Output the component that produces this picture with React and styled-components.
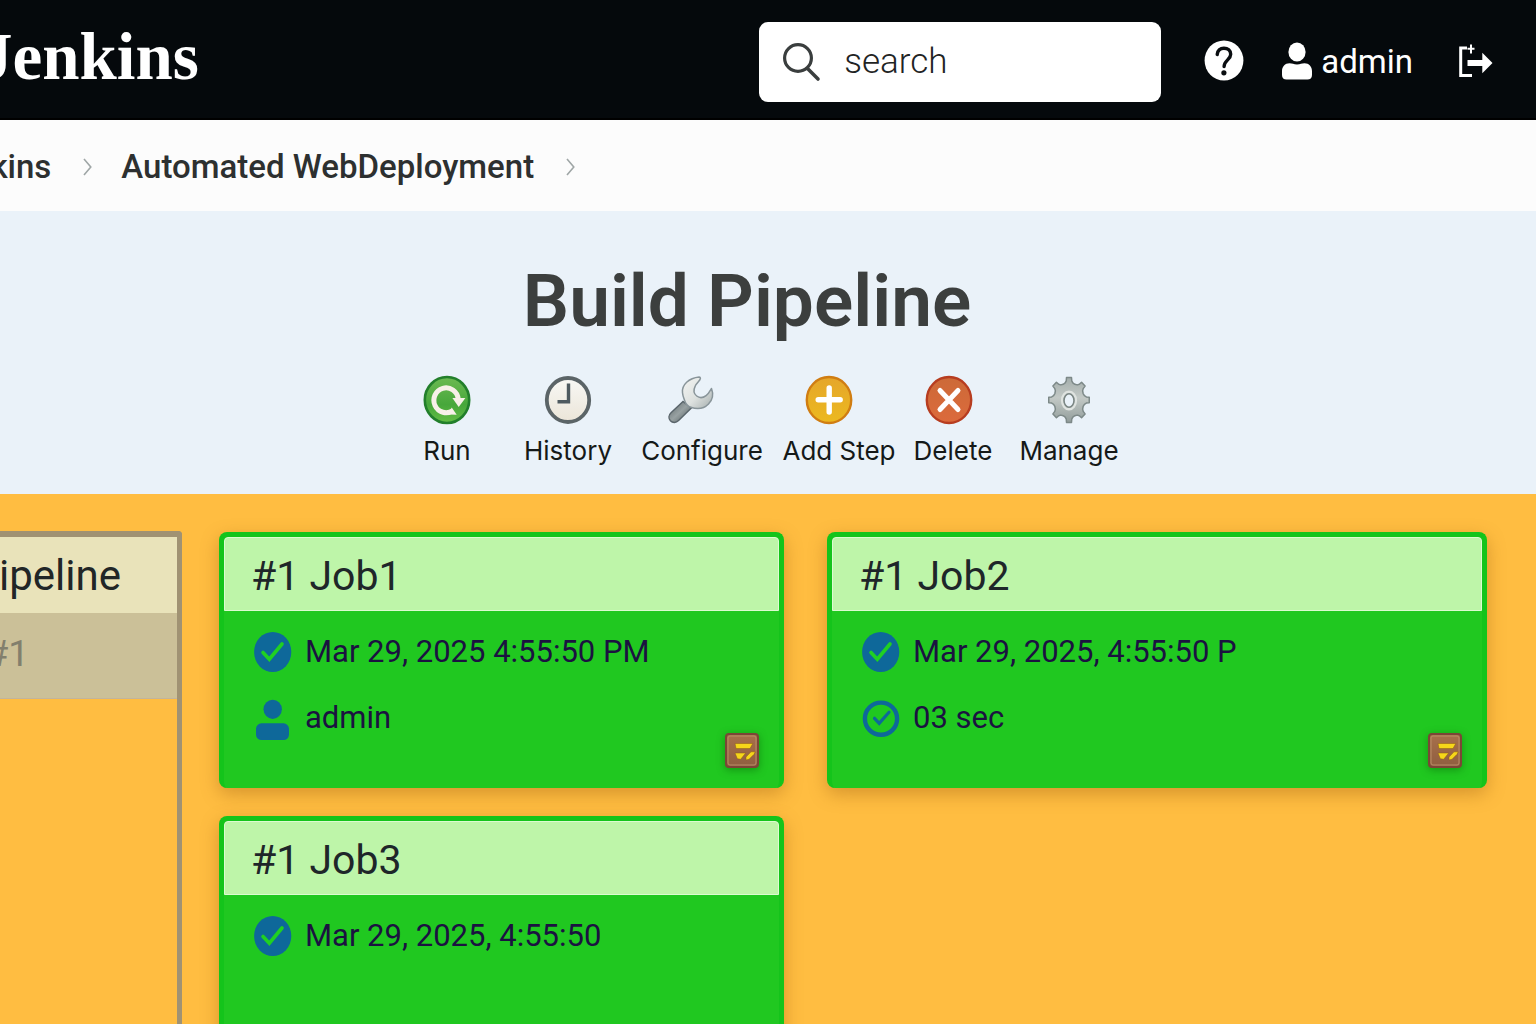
import React from "react";
import styled, { createGlobalStyle } from "styled-components";

const GlobalStyle = createGlobalStyle`
  *, *::before, *::after { box-sizing: border-box; }
  body { margin: 0; font-family: Roboto, "Liberation Sans", sans-serif; }
  h1, h2, p, ol, ul { margin: 0; padding: 0; }
  ol, ul { list-style: none; }
  button { border: 0; padding: 0; background: none; font: inherit; color: inherit; cursor: pointer; }
  a { color: inherit; text-decoration: none; }
  svg { display: block; flex: none; overflow: visible; }
`;

const Page = styled.div`
  display: flex;
  flex-direction: column;
  height: 100vh;
  overflow: hidden;
`;

/* ---------- top bar ---------- */

const TopBar = styled.header`
  display: flex;
  align-items: center;
  padding: 22px 43px 16px 0;
  background: #05090c;
  border-bottom: 2px solid #000;
  color: #fff;
`;

const Brand = styled.a`
  align-self: flex-start;
  margin-left: -21px;
  margin-right: auto;
  font: 700 67px/68px "Liberation Serif", serif;
`;

const SearchBox = styled.label`
  display: flex;
  align-items: center;
  gap: 24px;
  flex: 0 1 402px;
  min-width: 0;
  height: 80px;
  padding: 0 24px;
  border-radius: 9px;
  background: #fff;
`;

const SearchInput = styled.input`
  flex: 1;
  width: 100%;
  min-width: 0;
  border: 0;
  padding: 0;
  outline: 0;
  background: none;
  font: 300 35px/48px Roboto, "Liberation Sans", sans-serif;
  color: #1f2424;
  &::placeholder { color: #1f2424; opacity: 1; }
`;

const HelpButton = styled.button`
  margin-left: 44px;
`;

const UserLink = styled.a`
  display: flex;
  align-items: center;
  gap: 9px;
  margin-left: 38px;
  font-size: 33px;
  line-height: 40px;
`;

const LogoutButton = styled.button`
  margin-left: 46px;
`;

/* ---------- breadcrumbs ---------- */

const Crumbs = styled.ol`
  display: flex;
  align-items: center;
  height: 91px;
  padding-top: 2px;
  margin-left: -64px;
`;

const CrumbNav = styled.nav`
  flex: none;
  background: #fcfcfc;
`;

const Crumb = styled.li`
  display: flex;
  align-items: center;
  gap: 32px;
  margin-right: 29px;
  font-size: 33px;
  font-weight: 500;
  line-height: 40px;
  color: #2d3030;
`;

/* ---------- heading and actions ---------- */

const Hero = styled.section`
  display: flex;
  flex-direction: column;
  align-items: center;
  gap: 35px;
  flex: none;
  padding: 50px 42px 27px 0;
  background: #eaf2f9;
`;

const Title = styled.h1`
  font-size: 73px;
  font-weight: 600;
  line-height: 80px;
  color: #3c3f3e;
`;

const Toolbar = styled.div`
  display: grid;
  grid-template-columns: 134px 108px 160px 114px 114px 118px;
  padding-left: 14px;
`;

const ToolButton = styled.button`
  display: flex;
  flex-direction: column;
  align-items: center;
  gap: 11px;
  font: 400 26px/32px Inter, "Liberation Sans", sans-serif;
  color: #151918;
  white-space: nowrap;

  svg { margin-right: ${(p) => p.$iconShift || 0}px; }
`;

/* ---------- board ---------- */

const Board = styled.main`
  display: flex;
  gap: 37px;
  flex: 1;
  min-height: 0;
  padding: 37px 49px 0 0;
  background: #ffbd41;
`;

const Lane = styled.aside`
  flex: none;
  width: 182px;
  border: solid #a09273;
  border-width: 6px 5px 0 0;
  border-top-right-radius: 4px;
`;

const LaneTitle = styled.h2`
  display: flex;
  justify-content: flex-end;
  align-items: center;
  height: 76px;
  padding-right: 56px;
  background: #e9e3ba;
  font-size: 42px;
  font-weight: 400;
  color: #212627;
  white-space: nowrap;
`;

const LaneRun = styled.p`
  display: flex;
  justify-content: flex-end;
  align-items: center;
  height: 86px;
  padding: 0 148px 4px 0;
  background: #cbc098;
  border-bottom: 1px solid #c2b49c;
  font-size: 37px;
  color: #827f6d;
  white-space: nowrap;
`;

const Jobs = styled.div`
  flex: 1;
  display: grid;
  grid-template-columns: 565fr 660fr;
  grid-auto-rows: 256px;
  gap: 28px 43px;
  padding-top: 1px;
`;

const Card = styled.article`
  display: flex;
  flex-direction: column;
  border: 5px solid #14c41b;
  border-bottom: 0;
  border-radius: 8px;
  background: #20c820;
  background-clip: padding-box;
  background-clip: border-box;
  box-shadow: 0 6px 18px rgba(140, 80, 10, 0.36);
`;

const CardTitle = styled.h2`
  padding: 13px 26px 9px;
  border: 1px solid #dcfbd0;
  border-radius: 4px 4px 0 0;
  background: #bef5a9;
  font-size: 41px;
  font-weight: 400;
  line-height: 50px;
  color: #1e2629;
`;

const CardBody = styled.div`
  flex: 1;
  display: flex;
  justify-content: space-between;
  padding: 21px 20px 20px 30px;
`;

const Facts = styled.ul`
  display: flex;
  flex-direction: column;
  gap: 26px;
`;

const Fact = styled.li`
  display: flex;
  align-items: center;
  gap: 13px;
  height: 40px;
  font-size: 31px;
  line-height: 36px;
  color: #1b1240;
  white-space: nowrap;
`;

const NoteButton = styled.button`
  align-self: flex-end;
  width: 34px;
  height: 35px;
  filter: drop-shadow(0 2px 4px rgba(0, 70, 0, 0.4));
`;

/* ---------- icons ---------- */

const SearchIcon = () => (
  <svg width="37" height="38" viewBox="0 0 37 38" fill="none" stroke="#3a3e3e">
    <circle cx="15" cy="15" r="13.4" strokeWidth="3.2" />
    <path d="M24.5 25.5 35 36" strokeWidth="3.6" strokeLinecap="round" />
  </svg>
);

const HelpIcon = () => (
  <svg width="39" height="40" viewBox="0 0 39 40">
    <ellipse cx="19" cy="18.5" rx="19.4" ry="20" fill="#fff" />
    <path
      d="M12.200 12.500c.3-4 3-6.300 6.700-6.300 4 0 6.800 2.400 6.800 6 0 5.600-6.400 5.800-6.600 12.300"
      fill="none" stroke="#0a0e11" strokeWidth="3.4" strokeLinecap="round"
    />
    <circle cx="18.900" cy="30.800" r="2.600" fill="#0a0e11" />
  </svg>
);

const UserIcon = () => (
  <svg width="30" height="38" viewBox="0 0 30 38" fill="#fff">
    <ellipse cx="15" cy="9" rx="8.600" ry="9.600" />
    <path d="M7.500 20.300c3 0 4 1.200 7.500 1.200s4.500-1.200 7.500-1.200c4.500 0 7.500 3.400 7.500 8v3.600c0 3-1.800 4.600-4.500 4.600h-21C1.800 36.500 0 34.900 0 31.900v-3.600c0-4.600 3-8 7.500-8Z" />
  </svg>
);

const LogoutIcon = () => (
  <svg width="34" height="34" viewBox="0 0 34 34">
    <path d="M8 3H1.700v27.400H13" fill="none" stroke="#fff" strokeWidth="3" />
    <path d="M12-.5v9M8.500 3.800h7" stroke="#fff" strokeWidth="2" />
    <path d="M8.500 15h14.800V7.800L33.500 18 23.300 28.200v-7.200H8.500Z" fill="#fff" />
  </svg>
);

const Chevron = () => (
  <svg width="9" height="18" viewBox="0 0 9 18" fill="none" stroke="#9fa6a6" strokeWidth="1.600">
    <path d="m1 1 6.800 8L1 17" />
  </svg>
);

const RunIcon = () => (
  <svg width="48" height="48" viewBox="0 0 48 48">
    <defs>
      <linearGradient id="run" x1="0" y1="0" x2="0" y2="1">
        <stop offset="0" stopColor="#6cba52" />
        <stop offset="0.600" stopColor="#47a73b" />
        <stop offset="1" stopColor="#63bd44" />
      </linearGradient>
    </defs>
    <ellipse cx="24" cy="24" rx="22.200" ry="23" fill="url(#run)" stroke="#227f2b" strokeWidth="2.600" />
    <path d="M35.200 23A12.200 12.400 0 1 0 30 34.500" fill="none" stroke="#f7f0e8" strokeWidth="5" />
    <path d="M29.400 22h13l-6.700 9Z" fill="#f7f0e8" />
    <path d="m28.700 31.500 5 7.200-8-.2Z" fill="#f7f0e8" />
  </svg>
);

const HistoryIcon = () => (
  <svg width="48" height="48" viewBox="0 0 48 48">
    <defs>
      <linearGradient id="face" x1="0" y1="0" x2="0" y2="1">
        <stop offset="0" stopColor="#f8f8f5" />
        <stop offset="1" stopColor="#ebe5d8" />
      </linearGradient>
    </defs>
    <ellipse cx="24" cy="24" rx="21.200" ry="22" fill="url(#face)" stroke="#5b6467" strokeWidth="3.800" />
    <path d="M24.500 7.500v18.300h-11" fill="none" stroke="#4e5a60" strokeWidth="3.400" />
  </svg>
);

const ConfigureIcon = () => (
  <svg width="48" height="48" viewBox="0 0 48 48">
    <defs>
      <linearGradient id="head" x1="0" y1="0" x2="1" y2="1">
        <stop offset="0" stopColor="#f3f4f2" />
        <stop offset="0.550" stopColor="#dde1df" />
        <stop offset="1" stopColor="#a4adad" />
      </linearGradient>
      <linearGradient id="grip" x1="0" y1="0" x2="1" y2="1">
        <stop offset="0.150" stopColor="#6f797b" />
        <stop offset="0.500" stopColor="#98a1a2" />
        <stop offset="0.850" stopColor="#626c6e" />
      </linearGradient>
    </defs>
    <path
      d="M15 25.500 3 36.800c-2.500 2.400-2.700 5.700-.6 8 2.200 2.300 5.700 2.200 8.200-.2L23.300 32Z"
      fill="url(#grip)" stroke="#59646a" strokeWidth="1.400"
    />
    <path
      d="M31.100.9C21 1.900 13.500 8.700 14.500 16.700c.3 3.500 1.500 6 2.300 8.300.8 2.500 3.500 5.400 6 6.300 6 2.100 13 1.500 17.700-3.300 4-4.200 5.100-10 3-15.600-1.500 2.600-2.700 5.100-5.400 7.200-3 2.300-6.800 2.400-9.400.4-2.900-2.300-3.200-6.500-1.400-10.200 1.300-2.900 5.200-5.300 5.100-7.600-.1-.9-.4-1.200-1.300-1.300Z"
      fill="url(#head)" stroke="#89959a" strokeWidth="1.500" strokeLinejoin="round"
    />
  </svg>
);

const AddIcon = () => (
  <svg width="48" height="48" viewBox="0 0 48 48">
    <defs>
      <linearGradient id="add" x1="0" y1="0" x2="0" y2="1">
        <stop offset="0" stopColor="#e5a62a" />
        <stop offset="1" stopColor="#ecb91f" />
      </linearGradient>
    </defs>
    <ellipse cx="24" cy="24" rx="22.200" ry="23" fill="url(#add)" stroke="#d07d12" strokeWidth="2.400" />
    <path d="M24.200 12v24.100M13.200 23.800h22" stroke="#fff" strokeWidth="5.400" strokeLinecap="round" />
  </svg>
);

const DeleteIcon = () => (
  <svg width="48" height="48" viewBox="0 0 48 48">
    <defs>
      <linearGradient id="del" x1="0" y1="0" x2="0" y2="1">
        <stop offset="0" stopColor="#cc6a38" />
        <stop offset="1" stopColor="#dc6a3c" />
      </linearGradient>
    </defs>
    <ellipse cx="24" cy="24" rx="22.200" ry="23" fill="url(#del)" stroke="#b73d20" strokeWidth="2.400" />
    <path d="m15 14.500 18 19M33 14.500l-18 19" stroke="#fff" strokeWidth="5" strokeLinecap="round" />
  </svg>
);

const gearPath = (() => {
  const profile = [
    [-7, 1], [7, 1], [9, 0.860], [14, 0.780], [22.500, 0.750], [31, 0.780], [36, 0.860],
  ];
  const points = [];
  for (let tooth = 0; tooth < 8; tooth += 1) {
    profile.forEach(([deg, r]) => {
      const a = ((deg + tooth * 45) * Math.PI) / 180;
      points.push(`${(24 + 20.400 * r * Math.sin(a)).toFixed(2)} ${(24 - 22.600 * r * Math.cos(a)).toFixed(2)}`);
    });
  }
  return `M${points.join("L")}Z`;
})();

const ManageIcon = () => (
  <svg width="48" height="48" viewBox="0 0 48 48">
    <defs>
      <linearGradient id="gear" x1="0" y1="0" x2="0" y2="1">
        <stop offset="0" stopColor="#a3adab" />
        <stop offset="0.450" stopColor="#c3c9c6" />
        <stop offset="1" stopColor="#929d9b" />
      </linearGradient>
    </defs>
    <path d={gearPath} fill="url(#gear)" stroke="#7d8988" strokeWidth="1.500" strokeLinejoin="round" />
    <ellipse cx="24" cy="24.500" rx="6.800" ry="8.600" fill="none" stroke="#dfe3e0" strokeWidth="2.600" />
    <ellipse cx="24" cy="24.500" rx="5" ry="6.800" fill="#eaf2f9" stroke="#7b8684" strokeWidth="1.600" />
  </svg>
);

const DoneIcon = () => (
  <svg width="38" height="40" viewBox="0 0 38 40">
    <ellipse cx="18.700" cy="20" rx="18.600" ry="20" fill="#0e689a" />
    <path d="m9 20.500 6.300 6.700L28 12" fill="none" stroke="#20d022" strokeWidth="3.600" strokeLinecap="round" />
  </svg>
);

const PersonIcon = () => (
  <svg width="38" height="40" viewBox="0 0 38 40" fill="#0e689a">
    <ellipse cx="18.700" cy="11.300" rx="9.200" ry="9.600" />
    <rect x="2" y="25.300" width="33" height="16.700" rx="5.500" />
  </svg>
);

const DurationIcon = () => (
  <svg width="38" height="40" viewBox="0 0 38 40" fill="none" stroke="#0e689a">
    <circle cx="19" cy="20.700" r="16.100" strokeWidth="4.400" />
    <path d="m12.500 20.300 4.700 5L27 14.300" strokeWidth="3.200" strokeLinecap="round" />
  </svg>
);

const NoteIcon = () => (
  <svg width="34" height="35" viewBox="0 0 34 35">
    <defs>
      <linearGradient id="wood" x1="0" y1="0" x2="0" y2="1">
        <stop offset="0" stopColor="#a8704b" />
        <stop offset="1" stopColor="#8f5e40" />
      </linearGradient>
    </defs>
    <rect x="1" y="1" width="32" height="33" rx="3" fill="url(#wood)" stroke="#7b4636" strokeWidth="2" />
    <rect x="3" y="3" width="28" height="29" rx="2" fill="none" stroke="#b98d66" strokeWidth="1" />
    <path d="M10 10.500h17.800L25 15.500H11ZM10 20h10.700l-3 3.700-2 2.600-3.400-.6Z" fill="#f6d619" stroke="#8a5a18" strokeWidth="0.500" />
    <path d="M26 18.800h4.300L29 21.300l-5 5-3 .6v-2.800Z" fill="#f6d619" stroke="#8a5a18" strokeWidth="0.500" />
  </svg>
);

/* ---------- data ---------- */

const crumbs = ["Jenkins", "Automated WebDeployment"];

const actions = [
  { label: "Run", Icon: RunIcon },
  { label: "History", Icon: HistoryIcon },
  { label: "Configure", Icon: ConfigureIcon, iconShift: 20 },
  { label: "Add Step", Icon: AddIcon, iconShift: 20 },
  { label: "Delete", Icon: DeleteIcon, iconShift: 8 },
  { label: "Manage", Icon: ManageIcon },
];

const jobs = [
  {
    name: "#1 Job1",
    note: true,
    facts: [
      { Icon: DoneIcon, text: "Mar 29, 2025 4:55:50 PM" },
      { Icon: PersonIcon, text: "admin" },
    ],
  },
  {
    name: "#1 Job2",
    note: true,
    facts: [
      { Icon: DoneIcon, text: "Mar 29, 2025, 4:55:50 P" },
      { Icon: DurationIcon, text: "03 sec" },
    ],
  },
  {
    name: "#1 Job3",
    facts: [{ Icon: DoneIcon, text: "Mar 29, 2025, 4:55:50" }],
  },
];

export default function App() {
  return (
    <Page>
      <GlobalStyle />
      <TopBar>
        <Brand href="#">Jenkins</Brand>
        <SearchBox>
          <SearchIcon />
          <SearchInput type="search" placeholder="search" aria-label="search" />
        </SearchBox>
        <HelpButton aria-label="Help"><HelpIcon /></HelpButton>
        <UserLink href="#"><UserIcon />admin</UserLink>
        <LogoutButton aria-label="Log out"><LogoutIcon /></LogoutButton>
      </TopBar>

      <CrumbNav>
        <Crumbs>
          {crumbs.map((name) => (
            <Crumb key={name}><a href="#">{name}</a><Chevron /></Crumb>
          ))}
        </Crumbs>
      </CrumbNav>

      <Hero>
        <Title>Build Pipeline</Title>
        <Toolbar>
          {actions.map(({ label, Icon, iconShift }) => (
            <ToolButton key={label} $iconShift={iconShift}><Icon />{label}</ToolButton>
          ))}
        </Toolbar>
      </Hero>

      <Board>
        <Lane>
          <LaneTitle>Pipeline</LaneTitle>
          <LaneRun>#1</LaneRun>
        </Lane>
        <Jobs>
          {jobs.map((job) => (
            <Card key={job.name}>
              <CardTitle>{job.name}</CardTitle>
              <CardBody>
                <Facts>
                  {job.facts.map(({ Icon, text }) => (
                    <Fact key={text}><Icon />{text}</Fact>
                  ))}
                </Facts>
                {job.note && <NoteButton aria-label="Notes"><NoteIcon /></NoteButton>}
              </CardBody>
            </Card>
          ))}
        </Jobs>
      </Board>
    </Page>
  );
}
